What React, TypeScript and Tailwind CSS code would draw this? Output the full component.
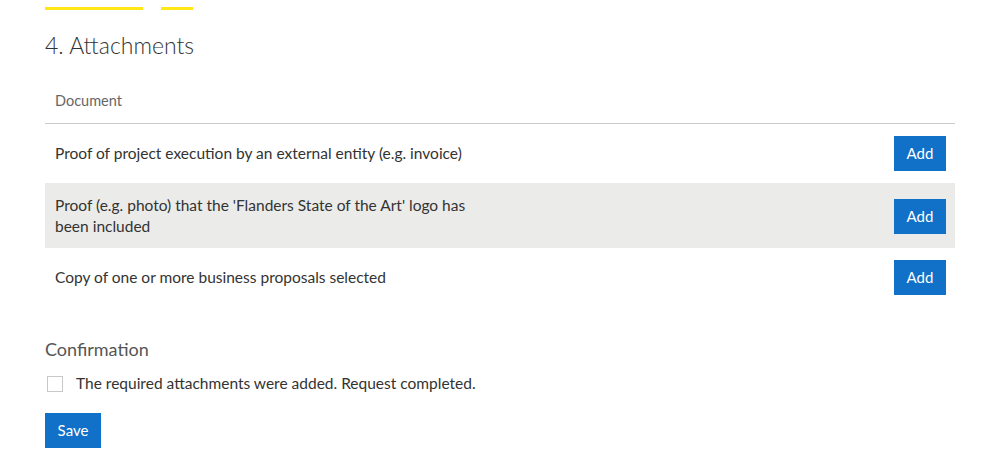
import { useState } from "react";

const DOCUMENTS = [
  "Proof of project execution by an external entity (e.g. invoice)",
  "Proof (e.g. photo) that the 'Flanders State of the Art' logo has been included",
  "Copy of one or more business proposals selected",
];

export default function App() {
  const [done, setDone] = useState(false);

  return (
    <div className="min-h-[473px] bg-white font-['Lato',sans-serif] text-[#333332]">
      <div className="w-[910px] ml-[45px] pt-[7px]">
        {/* accent bars */}
        <div className="flex gap-[18px]">
          <span className="h-[3px] w-[98px] bg-[#ffe615]" />
          <span className="h-[3px] w-[32px] bg-[#ffe615]" />
        </div>

        <h2 className="mt-[20px] text-[23px] font-light leading-[30px] text-[#333332]">
          4. Attachments
        </h2>

        <div className="mt-[31px]">
          <div className="border-b border-[#cbcbcb] px-[10px] pb-[12px] text-[14.5px] leading-[20px] text-[#666]">
            Document
          </div>

          {DOCUMENTS.map((doc, i) => (
            <div
              key={doc}
              className={
                "grid grid-cols-2 items-center " +
                (i === 1 ? "bg-[#ebebea] pt-[12px] pb-[11px]" : "py-[12px]")
              }
            >
              <p className="px-[10px] text-[15.5px] leading-[21px]">{doc}</p>
              <div className="flex justify-end pr-[9px]">
                <button
                  type="button"
                  className="h-[35px] w-[52px] bg-[#1170c7] text-[15px] text-white"
                >
                  Add
                </button>
              </div>
            </div>
          ))}
        </div>

        <h3 className="mt-[30px] text-[18px] leading-[24px] text-[#555]">Confirmation</h3>

        <label className="mt-[12px] flex items-center gap-[13px] text-[15.5px] leading-[21px]">
          <input
            type="checkbox"
            checked={done}
            onChange={() => setDone(!done)}
            className="ml-[2px] h-[16px] w-[16px] appearance-none border border-[#c8c8c8] bg-white checked:bg-[#1170c7]"
          />
          The required attachments were added. Request completed.
        </label>

        <button
          type="button"
          className="mt-[19px] h-[35px] w-[56px] bg-[#1170c7] text-[15px] text-white"
        >
          Save
        </button>
      </div>
    </div>
  );
}
